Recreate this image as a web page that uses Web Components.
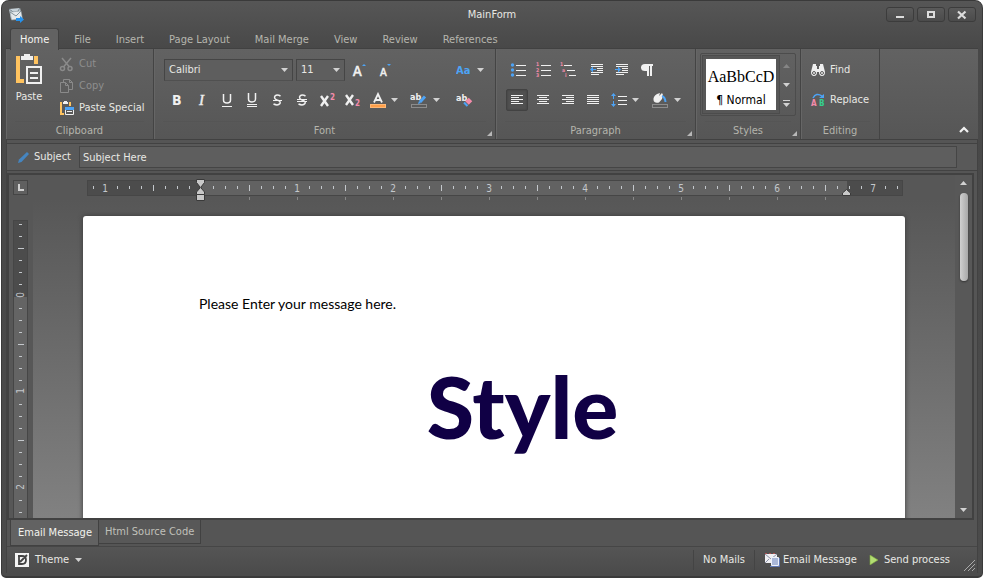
<!DOCTYPE html>
<html lang="en">
<head>
<meta charset="utf-8">
<title>MainForm</title>
<style>
html,body{height:100%;margin:0}
body{background:#fff;font:11px/14px "DejaVu Sans Condensed","Liberation Sans",sans-serif;color:#e8e8e4;overflow:hidden}
</style>
</head>
<body>
<app-window></app-window>
<script>
const W='#f0f0f0',B='#4da3f5',P='#f48bab',O='#ffc35f';
const lines=(rows)=>rows.map(([x,y,w])=>`<rect x="${x}" y="${y}" width="${w}" height="1"/>`).join('');
const T=(x,y,s,t,c,extra='')=>`<text x="${x}" y="${y}" font-size="${s}" fill="${c}" font-weight="bold" ${extra}>${t}</text>`;
/* name: [width, height, markup] */
const ICONS={
paste:[28,32,`<path fill="${O}" d="M1 3h4v23h4v4H1zM19 3h4v8h-4z"/><path fill="${W}" d="M6 3h3V1h6v2h3v4H6z"/><rect x="12" y="14" width="14" height="16" fill="none" stroke="${W}" stroke-width="2"/><path fill="${W}" d="M15 19h8v2h-8zM15 24h8v2h-8z"/>`],
cut:[16,16,`<g fill="none" stroke="#8a8a8a" stroke-width="1.5"><path d="M3 2l7.5 9M12 2L4.500 11"/><circle cx="3.500" cy="12.500" r="2"/><circle cx="11" cy="12.500" r="2"/></g>`],
copy:[16,16,`<g fill="none" stroke="#8a8a8a"><path d="M4.500 4V1.500h6l3 3v7H10"/><path d="M1.500 4.500h5l3 3v7h-8z"/><path d="M10.500 1.500v3h3M6.500 4.500v3h3"/></g>`],
pspecial:[16,16,`<path fill="${O}" d="M1 2h2v11h2v2H1zM10 2h2v4h-2z"/><path fill="${W}" d="M4 2h1V1h3v1h1v2H4z"/><path fill="none" stroke="${W}" d="M6.500 8.500v6h8v-6"/><path fill="${W}" d="M8 11h5v1H8z"/><path fill="${B}" d="M6 7h9v3H6z"/>`],
bold:[16,16,T(3,13,14,'B',W)],
italic:[16,16,`<text x="5" y="13" font-size="15" fill="${W}" font-style="italic" font-family="Liberation Serif,serif" stroke="${W}" stroke-width=".4">I</text>`],
under:[16,16,`<g fill="none" stroke="${W}"><path stroke-width="1.500" d="M4.500 2v6q0 3 3.500 3t3.500-3V2"/><path d="M3 14.500h10"/></g>`],
dunder:[16,16,`<g fill="none" stroke="${W}"><path stroke-width="1.500" d="M4.500 1v6q0 3 3.500 3t3.500-3V1"/><path d="M3 12.500h10M3 14.500h10"/></g>`],
strike:[16,16,`<path fill="none" stroke="${W}" stroke-width="1.500" d="M11.500 4Q8 2 6 4q-1.500 2.500 2 4 4 1 3 3.500-2 2.500-6.500.5"/><path fill="${W}" d="M4 8h9v1H4z"/>`],
dstrike:[16,16,`<path fill="none" stroke="${W}" stroke-width="1.500" d="M11.500 4Q8 2 6 4q-1.500 2.500 2 4 4 1 3 3.500-2 2.500-6.500.5"/><path fill="${W}" d="M3 7h10v1H3zM3 9h10v1H3z"/>`],
sup:[18,16,`<path fill="none" stroke="${W}" stroke-width="2.400" d="M3 4l7 10M10 4L3 14"/>`+T(12,8,8,'2',P)],
sub:[18,16,`<path fill="none" stroke="${W}" stroke-width="2.400" d="M3 3l7 10M10 3L3 13"/>`+T(12,14,8,'2',P)],
fcolor:[16,16,`<path fill="none" stroke="${W}" stroke-width="1.800" d="M4 10.500L8 2l4 8.500M5.500 8h5"/><rect y="12.500" x=".5" width="15" height="3" fill="#ff9f4a" stroke="#ffb875"/>`],
hilite:[18,16,T(0,8,9,'ab',W)+`<path stroke="${B}" stroke-width="3" d="M10 10l5-5.500"/><path fill="${B}" d="M8 12l1-3 2 2z"/><rect x="1.500" y="12.500" width="15" height="3" fill="none" stroke="#8c8c8c"/>`],
erase:[18,16,T(0,9,9,'ab',W)+`<path stroke="${P}" stroke-width="5" d="M11 11l3.500-3.500"/><path stroke="${B}" stroke-width="5" d="M9 13l1.500-1.500"/>`],
grow:[16,16,`<text x="2" y="14" font-size="14" fill="${W}" stroke="${W}" stroke-width=".7">A</text><path fill="${B}" d="M11 4l2-2 2 2z"/>`],
shrink:[16,16,`<text x="4" y="14" font-size="11" fill="${W}" stroke="${W}" stroke-width=".5">A</text><path fill="${B}" d="M11 2h4l-2 2z"/>`],
aa:[16,16,T(0,12,11,'Aa',B)],
bullets:[16,16,`<g fill="${B}"><circle cx="2.500" cy="3" r="1.700"/><circle cx="2.500" cy="8" r="1.700"/><circle cx="2.500" cy="13" r="1.700"/></g><g fill="${W}">${lines([[6,3,10],[6,8,10],[6,13,10]])}</g>`],
numbers:[16,16,T(1,4,5,'1',P)+T(1,10,5,'2',P)+T(1,15,5,'3',P)+`<g fill="${W}">${lines([[6,3,10],[6,8,10],[6,13,10]])}</g>`],
multi:[16,16,T(0,4,5,'1',P)+T(2,10,5,'a',P)+T(5,15,5,'i',P)+`<g fill="${W}">${lines([[4,3,8],[7,8,8],[9,13,7]])}</g>`],
outdent:[16,16,`<g fill="${W}">${lines([[2,2,12],[2,4,12],[8,6,6],[8,8,6],[2,10,12],[2,12,8]])}</g><path fill="${B}" d="M1 7.500l3-3V7h3v1H4v2.500z"/>`],
indent:[16,16,`<g fill="${W}">${lines([[2,2,12],[2,4,12],[8,6,6],[8,8,6],[2,10,12],[2,12,8]])}</g><path fill="${B}" d="M7 7.500l-3-3V7H1v1h3v2.500z"/>`],
pilcrow:[16,16,`<path fill="${W}" d="M7 2h7v2h-1v10h-2V4h-1v10H8V9H6Q2 9 2 5.500T6 2z"/>`],
left:[16,16,`<g fill="${W}">${lines([[2,3,12],[2,5,8],[2,7,12],[2,9,8],[2,11,12]])}</g>`],
center:[16,16,`<g fill="${W}">${lines([[2,3,12],[4,5,8],[2,7,12],[4,9,8],[2,11,12]])}</g>`],
right:[16,16,`<g fill="${W}">${lines([[2,3,12],[6,5,8],[2,7,12],[6,9,8],[2,11,12]])}</g>`],
justify:[16,16,`<g fill="${W}">${lines([[2,3,12],[2,5,12],[2,7,12],[2,9,12],[2,11,12]])}</g>`],
spacing:[16,16,`<path fill="${B}" d="M0 4l2.500-3L5 4H3v8h2l-2.500 3L0 12h2V4z"/><path fill="#5a5a5a" d="M1 7h3v2H1z"/><g fill="${W}">${lines([[7,4,9],[7,8,9],[7,12,9]])}</g>`],
fill:[18,16,`<path fill="${W}" d="M6 2l3-1-1 3 3-3 1 2-1 4-3 3.500q-5 1-5.500-2.500T6 2z"/><path fill="none" stroke="${B}" stroke-width="2" d="M11 4q3 1 3.500 6"/><rect x="1.500" y="12.500" width="15" height="3" fill="none" stroke="#8c8c8c"/>`],
find:[16,16,`<path fill="${W}" d="M3 2h3v2h1v3h2V4h1V2h3l2 8q0 4-3 4t-3-4H7q0 4-3 4t-3-4z"/><g fill="none" stroke="#5a5a5a"><circle cx="4" cy="11" r="1.500"/><circle cx="12" cy="11" r="1.500"/></g>`],
replace:[16,16,T(1,14,8,'A',P)+T(9,14,8,'B','#35d08e')+`<path fill="none" stroke="${B}" stroke-width="1.500" d="M3 6q3-6 9-2"/><path fill="${B}" d="M9 6h5V2z"/>`],
arrow:[7,4,`<path fill="#d2d2d2" d="M0 0h7L3.500 4z"/>`],
up:[7,4,`<path fill="#d2d2d2" d="M0 4h7L3.500 0z"/>`],
updim:[7,4,`<path fill="#858585" d="M0 4h7L3.500 0z"/>`],
more:[7,7,`<path fill="#d2d2d2" d="M0 0h7v1H0zM0 3h7L3.500 7z"/>`],
launch:[5,5,`<path fill="#b8b8b8" d="M5 0v5H0z"/>`],
collapse:[10,7,`<path fill="none" stroke="#f2f2f2" stroke-width="2.200" d="M1 6l4-4 4 4"/>`],
pencil:[13,12,`<path fill="#4585c0" d="M1 12l1-3.500L10 1l2 2-7.500 8z"/>`],
app:[16,16,`<path fill="#c8d3da" d="M1 2l11-1 2 9-11 2z"/><path fill="none" stroke="#77858e" d="M1 2l7 5 4-6"/><path fill="#e4e9ec" stroke="#8b9aa3" stroke-width=".6" d="M2 5l11-1 1.500 8-11 1z"/><path fill="none" stroke="#84929a" d="M2 5l6 4 5-5"/><path fill="#2592ee" d="M8 11h4V9l4 3.500L12 16v-2H8z"/>`],
min:[12,10,`<path fill="#dcdcdc" d="M2 6h8v2H2z"/>`],
max:[12,10,`<path fill="none" stroke="#dcdcdc" stroke-width="2" d="M3 2h6v5H3z"/>`],
close:[12,10,`<path stroke="#dcdcdc" stroke-width="2.200" d="M2 1.500l7.500 7M9.500 1.500l-7.500 7"/>`],
theme:[14,14,`<path fill="#f4f4f4" d="M0 0h14v14H0z"/><path fill="none" stroke="#444" stroke-width="1.800" d="M3 3h4q4 0 4 4t-4 4H4V4M5 9l7-7"/>`],
mails:[16,14,`<path fill="#f0f0f4" d="M1 1h12v9H1z"/><path fill="none" stroke="#b05050" stroke-dasharray="2 2" d="M1 .5h12"/><path fill="none" stroke="#8d93a8" d="M1 1l6 5 6-5M1 10l4-4"/><path fill="#a9b7d8" stroke="#eef2fb" d="M7.500 4.500h7v8h-7z"/><path fill="none" stroke="#5f78b5" d="M6 13.500h9.500V5"/>`],
play:[9,10,`<path fill="#b2dd72" stroke="#7da73f" stroke-width=".6" d="M1 0l8 5-8 5z"/>`],
grip:[11,11,`<path stroke="#aaa" d="M0 11L11 0M4 11l7-7M8 11l3-3"/>`],
firstline:[9,22,`<g fill="#c8c8c8" stroke="#3a3a3a"><path d="M.5.500h8v3L5 8v1l3.500 4v2.500h-8V13L4 9V8L.5 3.500z"/><path d="M.5 15.500h8v6h-8z"/></g>`],
rightind:[9,7,`<path fill="#c8c8c8" stroke="#3a3a3a" d="M.5 6.500V4l4-3.500L8.500 4v2.500z"/>`],
tabstop:[6,7,`<path fill="#d0d0d0" d="M0 0h2v5h4v2H0z"/>`]
};
const RESET=`:host,*{box-sizing:border-box}button,select,input{font:inherit;color:inherit;margin:0;padding:0;border:0;background:none;border-radius:0}button{display:flex;align-items:center;white-space:nowrap}`;
function define(name,html){
  customElements.define(name,class extends HTMLElement{
    connectedCallback(){
      if(this.shadowRoot)return;
      const t=document.createElement('template');
      t.innerHTML='<style>'+RESET+'</style>'+(typeof html==='function'?html(this):html);
      this.attachShadow({mode:'open'}).append(t.content.cloneNode(true));
    }
  });
}
define('ui-icon',el=>{const [w,h,m]=ICONS[el.getAttribute('name')];
  return `<style>:host{display:block;flex:none}svg{display:block}</style><svg width="${w}" height="${h}" viewBox="0 0 ${w} ${h}" font-family="DejaVu Sans Condensed" aria-hidden="true">${m}</svg>`});

/* Icon-only button, optionally with a drop-down arrow */
define('tool-button',el=>`<style>:host{display:block;flex:none}
button{height:22px;width:25px;justify-content:center;border-radius:2px}
:host([split]) button{width:40px;gap:5px;justify-content:flex-start;padding-left:6px}
:host([pressed]) button{width:22px;margin:0 2px 0 1px;background:#505050;border:1px solid #424242;box-shadow:inset 0 0 2px #3c3c3c}</style>
<button type="button" aria-label="${el.getAttribute('label')}" ${el.hasAttribute('pressed')?'aria-pressed="true"':''}><ui-icon name="${el.getAttribute('icon')}"></ui-icon>${el.hasAttribute('split')?'<ui-icon name="arrow"></ui-icon>':''}</button>`);

define('text-button',el=>`<style>:host{display:block}button{height:22px;gap:4px}
:host([disabled]) button{color:#8e8e8e}</style>
<button type="button" ${el.hasAttribute('disabled')?'disabled':''}><ui-icon name="${el.getAttribute('icon')}"></ui-icon><slot></slot></button>`);

define('combo-box',el=>`<style>:host{display:grid;grid-template-columns:1fr 16px;align-items:center;height:22px;border:1px solid #454545;border-bottom-color:#505050;background:#5e5e5e}
select{appearance:none;grid-area:1/1/2/3;height:20px;padding-left:4px;width:100%}ui-icon{grid-area:1/2;pointer-events:none;justify-self:center}</style>
<select aria-label="${el.getAttribute('label')}"><option>${el.getAttribute('value')}</option></select><ui-icon name="arrow"></ui-icon>`);

define('ribbon-group',el=>`<style>:host{display:grid;grid-template-rows:1fr 18px;position:relative;height:90px;flex:none;border-right:1px solid #444;box-shadow:inset 1px 0 #666}
.body{padding:10px 9px 0;display:flex;flex-direction:column;gap:8px;min-width:0}
footer{text-align:center;color:#b4b4ac;line-height:18px;border-top:1px solid #555;margin:0 9px}
button{position:absolute;right:3px;bottom:3px}</style>
<div class="body" part="body"><slot></slot></div><footer>${el.getAttribute('caption')}</footer>
${el.hasAttribute('launcher')?`<button type="button" aria-label="${el.getAttribute('caption')} settings"><ui-icon name="launch"></ui-icon></button>`:''}`);

define('tool-row',`<style>:host{display:flex;align-items:center;height:22px}</style><slot></slot>`);

define('style-gallery',`<style>:host{display:flex;border:1px solid #4c4c4c;border-radius:2px;height:63px;padding:2px}
.item{display:flex;flex-direction:column;align-items:stretch;gap:6px;border:3px solid #575757;outline:1px solid #4c4c4c;background:#fff;color:#000;width:76px;height:57px;padding-top:8px}
.a{font:16px/20px "Liberation Serif",serif;text-align:center}.n{font-size:12px;line-height:14px;text-align:center}
.nav{flex:1;display:flex;flex-direction:column;align-items:center}.nav button{flex:1}</style>
<button class="item" type="button"><span class="a">AaBbCcD</span><span class="n">¶ Normal</span></button>
<div class="nav"><button type="button" aria-label="Previous"><ui-icon name="updim"></ui-icon></button><button type="button" aria-label="Next"><ui-icon name="arrow"></ui-icon></button><button type="button" aria-label="More"><ui-icon name="more"></ui-icon></button></div>`);

define('ribbon-bar',`<style>:host{display:flex;background:linear-gradient(#626262,#565656);border:1px solid #414141;border-width:1px 0;height:92px}
.clip{width:148px}.font{width:342px}.para{width:200px}.styles{width:105px}.edit{width:79px}
.clip::part(body){flex-direction:row;padding:4px 9px 0;gap:16px}
.big button{flex-direction:column;gap:5px}.small{display:flex;flex-direction:column}
.styles::part(body){padding:4px}.edit::part(body){padding-left:9px}
.font::part(body){padding:10px 5px 0 10px}
.gap{width:4px}.end{margin-left:auto;align-self:flex-end;padding:0 9px 6px 0}
combo-box.f{width:129px;margin-right:3px}combo-box.s{width:49px;margin-right:1px}
.aa{margin-left:auto}.er{margin-left:8px}</style>
<ribbon-group class="clip" caption="Clipboard"><div class="big"><button type="button"><ui-icon name="paste"></ui-icon><span>Paste</span></button></div>
<div class="small"><text-button icon="cut" disabled>Cut</text-button><text-button icon="copy" disabled>Copy</text-button><text-button icon="pspecial">Paste Special</text-button></div></ribbon-group>
<ribbon-group class="font" caption="Font" launcher>
<tool-row><combo-box class="f" label="Font" value="Calibri"></combo-box><combo-box class="s" label="Font size" value="11"></combo-box><tool-button icon="grow" label="Grow font"></tool-button><tool-button icon="shrink" label="Shrink font"></tool-button><tool-button class="aa" icon="aa" label="Change case" split></tool-button></tool-row>
<tool-row><tool-button icon="bold" label="Bold"></tool-button><tool-button icon="italic" label="Italic"></tool-button><tool-button icon="under" label="Underline"></tool-button><tool-button icon="dunder" label="Double underline"></tool-button><tool-button icon="strike" label="Strikethrough"></tool-button><tool-button icon="dstrike" label="Double strikethrough"></tool-button><tool-button icon="sup" label="Superscript"></tool-button><tool-button icon="sub" label="Subscript"></tool-button><tool-button icon="fcolor" label="Font color" split></tool-button><tool-button icon="hilite" label="Highlight" split></tool-button><tool-button class="er" icon="erase" label="Clear formatting"></tool-button></tool-row></ribbon-group>
<ribbon-group class="para" caption="Paragraph" launcher>
<tool-row><tool-button icon="bullets" label="Bullets"></tool-button><tool-button icon="numbers" label="Numbering"></tool-button><tool-button icon="multi" label="Multilevel list"></tool-button><span class="gap"></span><tool-button icon="outdent" label="Decrease indent"></tool-button><tool-button icon="indent" label="Increase indent"></tool-button><tool-button icon="pilcrow" label="Show marks"></tool-button></tool-row>
<tool-row><tool-button icon="left" label="Align left" pressed></tool-button><tool-button icon="center" label="Center"></tool-button><tool-button icon="right" label="Align right"></tool-button><tool-button icon="justify" label="Justify"></tool-button><tool-button icon="spacing" label="Line spacing" split></tool-button><tool-button icon="fill" label="Shading" split></tool-button></tool-row></ribbon-group>
<ribbon-group class="styles" caption="Styles" launcher><style-gallery></style-gallery></ribbon-group>
<ribbon-group class="edit" caption="Editing"><text-button icon="find">Find</text-button><text-button icon="replace">Replace</text-button></ribbon-group>
<button class="end" type="button" aria-label="Collapse ribbon"><ui-icon name="collapse"></ui-icon></button>`);

define('title-bar',`<style>:host{display:grid;grid-template-columns:1fr auto 1fr;align-items:center;height:27px;padding:0 2px}
h1{font:inherit;margin:0}.b{display:flex;gap:3px;justify-content:flex-end}
.b button{width:28px;height:15px;justify-content:center;border:1px solid #3c3c3c;border-radius:3px;background:linear-gradient(#5a5a5a,#4b4b4b)}</style>
<ui-icon name="app"></ui-icon><h1>MainForm</h1><div class="b"><button type="button" aria-label="Minimize"><ui-icon name="min"></ui-icon></button><button type="button" aria-label="Maximize"><ui-icon name="max"></ui-icon></button><button type="button" aria-label="Close"><ui-icon name="close"></ui-icon></button></div>`);

define('ribbon-tabs',`<style>:host{display:flex;gap:5px;height:20px;padding-left:4px}
button{height:22px;padding:0 9px;border:1px solid transparent;border-bottom:0;color:#b6b6ae}
[aria-selected=true]{background:#626262;border-color:#414141;border-radius:3px 3px 0 0;color:#f4f4f0;position:relative}</style>
${['Home','File','Insert','Page Layout','Mail Merge','View','Review','References'].map((t,i)=>`<button type="button" role="tab" aria-selected="${i===0}">${t}</button>`).join('')}`);

define('subject-bar',`<style>:host{display:flex;align-items:center;flex:none;height:28px;border:1px solid #424242;border-width:1px 0;background:#595959;margin:3px 0 2px;padding:0 20px 0 10px}
label{padding:0 8px 0 4px}input{flex:1;min-width:0;height:22px;border:1px solid #454545;background:#5e5e5e;padding:0 3px}</style>
<ui-icon name="pencil"></ui-icon><label for="s">Subject</label><input id="s" type="text" value="Subject Here">`);

/* Inch ruler: 96px to the inch, a tick at every eighth */
define('inch-ruler',el=>{
  const v=el.hasAttribute('vertical'),zero=+el.getAttribute('zero'),len=+el.getAttribute('length');
  let m='';
  for(let k=-Math.floor(zero/12);zero+k*12<len-4;k++){
    const p=zero+k*12;
    if(k%8===0){
      if(k||v)m+=v?`<text transform="translate(11 ${p-1}) rotate(-90)" text-anchor="middle">${Math.abs(k/8)}</text>`:`<text x="${p}" y="12" text-anchor="middle">${Math.abs(k/8)}</text>`;
    }else{const h=k%4===0?6:3,a=8-h/2|0;m+=v?`<rect x="${a}" y="${p}" width="${h}" height="1"/>`:`<rect x="${p}" y="${a}" width="1" height="${h}"/>`}
    if(!v&&k>0&&k%4===0&&k<54)m+=`<rect x="${p}" y="17" width="1" height="3" fill="#888"/>`;
  }
  const end=760;
  return `<style>:host{display:block}svg{display:block;overflow:visible;font-size:10px;fill:#c4c8cc}</style>
<svg width="${v?15:len}" height="${v?len:20}" aria-hidden="true"><rect x=".5" y=".5" width="${v?14:len-1}" height="${v?len:15}" fill="#4c4c4c" stroke="#464646"/>
${v?`<rect x="1" y="77" width="13" height="${len}" fill="#646464"/>`:`<rect x="${zero}" y="1" width="${end-zero}" height="14" fill="#626262"/>`}${m}</svg>`;
});

define('message-sheet',`<style>:host{display:block;width:822px;min-height:400px;background:#fff;border-radius:3px 3px 0 0;box-shadow:0 0 5px #3a3a3a;color:#000;padding:79px 59px 0 116px;font-family:Lato,sans-serif}
p{margin:0;font-size:14px;line-height:18px}h2{margin:40px 0 0;font-size:86px;line-height:106px;font-weight:900;color:#100045;text-align:center}</style>
<p>Please Enter your message here.</p><h2>Style</h2>`);

define('message-editor',`<style>:host{display:grid;grid-template:25px minmax(0,1fr)/24px minmax(0,1fr) 17px;flex:1;min-height:0;margin-right:3px;border:2px solid #414141;background:#575757}
.c{padding:5px 0 0 4px}.c button{width:15px;height:15px;border:1px solid #454545;background:#606060;justify-content:center}
.top{padding:5px 0 0 2px;display:flex;justify-content:center;min-width:0}.r{position:relative;flex:none;width:816px}
.m{position:absolute}.m1{left:109px;top:-1px}.m2{left:755px;top:9px}
.l{padding:20px 0 0 4px;overflow:hidden}
.v{background:linear-gradient(#575757,#818181);overflow:hidden;display:flex;justify-content:center;padding-top:16px;min-width:0}
message-sheet{flex:none}
.s{grid-area:1/3/3/4;display:flex;flex-direction:column;align-items:center;justify-content:space-between;padding:6px 0;background:#585858}
.t{width:8px;height:88px;border-radius:4px;background:linear-gradient(90deg,#d0d0d0,#a8a8a8);box-shadow:0 1px 2px #333}.u{display:flex;flex-direction:column;gap:8px;align-items:center}</style>
<div class="c"><button type="button" aria-label="Tab stop"><ui-icon name="tabstop"></ui-icon></button></div>
<div class="top"><div class="r"><inch-ruler zero="114" length="816"></inch-ruler><ui-icon class="m m1" name="firstline"></ui-icon><ui-icon class="m m2" name="rightind"></ui-icon></div></div>
<div class="s"><div class="u"><ui-icon name="up"></ui-icon><div class="t"></div></div><ui-icon name="arrow"></ui-icon></div>
<div class="l"><inch-ruler vertical zero="76" length="298"></inch-ruler></div>
<div class="v"><message-sheet></message-sheet></div>`);

define('view-tabs',`<style>:host{display:flex;align-items:flex-start;height:26px;flex:none;padding-left:3px}
button{border:1px solid #414141;border-top:0;padding:0 6px;height:24px;background:#585858;color:#c0c0ba}
[aria-selected=true]{height:26px;padding-left:7px;background:#626262;color:#f2f2ee}button+button{border-left:0}</style>
<button type="button" role="tab" aria-selected="true">Email Message</button><button type="button" role="tab" aria-selected="false">Html Source Code</button>`);

define('status-bar',`<style>:host{display:flex;align-items:center;flex:none;height:27px;border-top:1px solid #464646;background:linear-gradient(#555,#4b4b4b);padding:0 2px 0 8px}
button{gap:6px;height:22px}.sp{margin-left:auto}.x{border:1px solid #444;border-width:0 1px;padding:0 9px;height:20px;line-height:20px}
.p{margin-left:12px;gap:6px}.e{margin-left:9px;gap:3px}ui-icon.g{align-self:flex-end;margin:0 0 2px 14px}</style>
<button type="button"><ui-icon name="theme"></ui-icon>Theme<ui-icon name="arrow"></ui-icon></button>
<span class="sp x">No Mails</span><button class="e" type="button"><ui-icon name="mails"></ui-icon>Email Message</button><button class="p" type="button"><ui-icon name="play"></ui-icon>Send process</button><ui-icon class="g" name="grip"></ui-icon>`);

define('app-window',`<style>:host{display:flex;flex-direction:column;height:100vh;margin:0 1px;padding:0 4px 3px;border:1px solid #3a3a3a;border-bottom-width:2px;border-radius:8px 8px 5px 5px;background:linear-gradient(#565656,#484848 48px,#4b4b4b);overflow:hidden}
main{flex:1;min-height:0;display:flex;flex-direction:column;background:#555;border:1px solid #424242;border-width:0 1px}</style>
<title-bar></title-bar><ribbon-tabs></ribbon-tabs><ribbon-bar></ribbon-bar>
<main><subject-bar></subject-bar><message-editor></message-editor><view-tabs></view-tabs><status-bar></status-bar></main>`);
</script>
</body>
</html>
